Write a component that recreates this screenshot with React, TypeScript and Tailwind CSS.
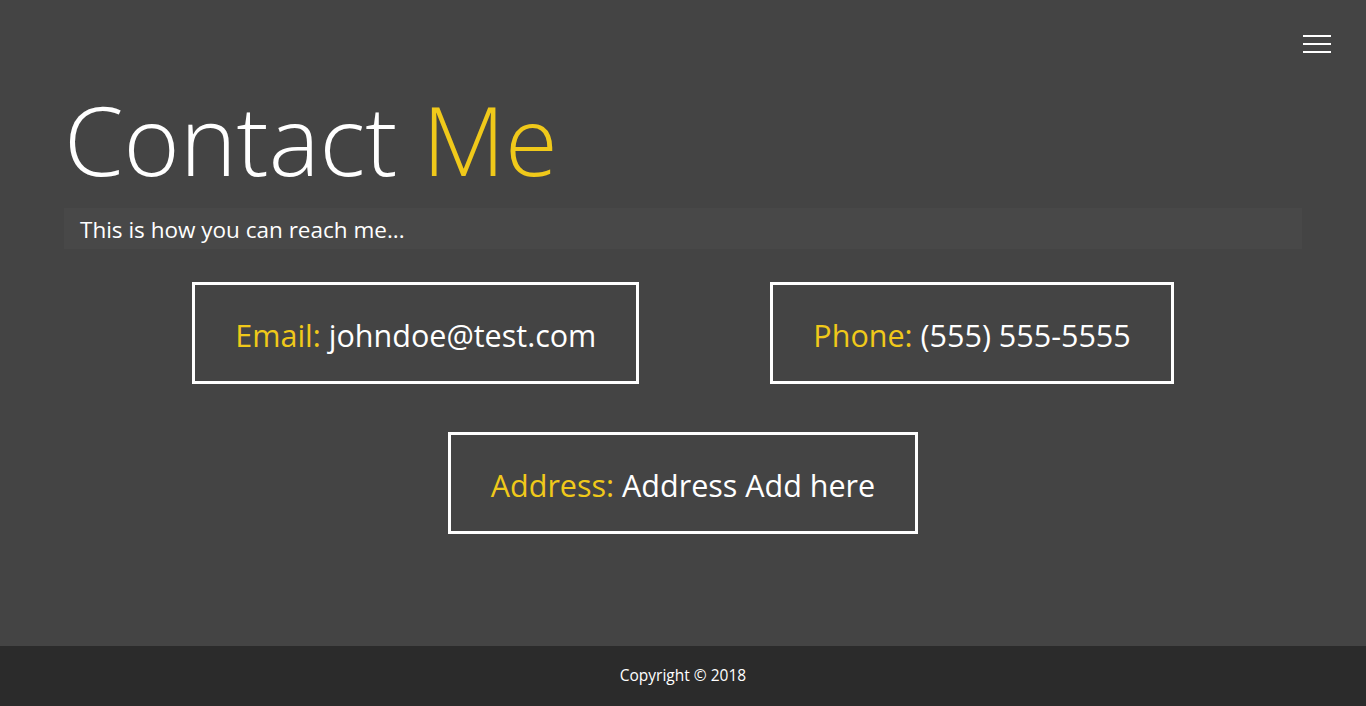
import React from "react";

const font = { fontFamily: '"Open Sans", "Noto Sans", "Liberation Sans", sans-serif' };

function InfoBox({ label, value }: { label: string; value: string }) {
	return (
		<div className="border-[3px] border-white px-[40px] pt-[5px] h-[102px] flex items-center justify-center text-[30.5px] text-white whitespace-nowrap">
			<span className="text-[#f0c91a]">{label}</span>
			<span className="ml-[8px]">{value}</span>
		</div>
	);
}

export default function App() {
	return (
		<div className="h-[706px] flex flex-col bg-[#444444]" style={font}>
			<main className="flex-1 flex flex-col">
				<nav className="flex justify-end pt-[35px] pr-[35px]">
					<button className="w-[28px] flex flex-col gap-[6px]">
						<span className="block h-[2px] bg-white"></span>
						<span className="block h-[2px] bg-white"></span>
						<span className="block h-[2px] bg-white"></span>
					</button>
				</nav>
				<section className="px-[64px]">
					<h1 className="mt-[38px] text-[96px] leading-none font-light text-white">
						Contact <span className="text-[#f0c91a]">Me</span>
					</h1>
					<div className="mt-[21px] h-[41px] bg-[#484848] pl-[16px] pt-[3px] flex items-center text-[22.5px] text-white">
						This is how you can reach me...
					</div>
					<div className="mt-[33px] flex justify-center gap-[131px]">
						<InfoBox label="Email:" value="johndoe@test.com" />
						<InfoBox label="Phone:" value="(555) 555-5555" />
					</div>
					<div className="mt-[48px] flex justify-center">
						<InfoBox label="Address:" value="Address Add here" />
					</div>
				</section>
			</main>
			<footer className="h-[60px] bg-[#2b2b2b] flex items-center justify-center text-[15.5px] text-white">
				Copyright © 2018
			</footer>
		</div>
	);
}
